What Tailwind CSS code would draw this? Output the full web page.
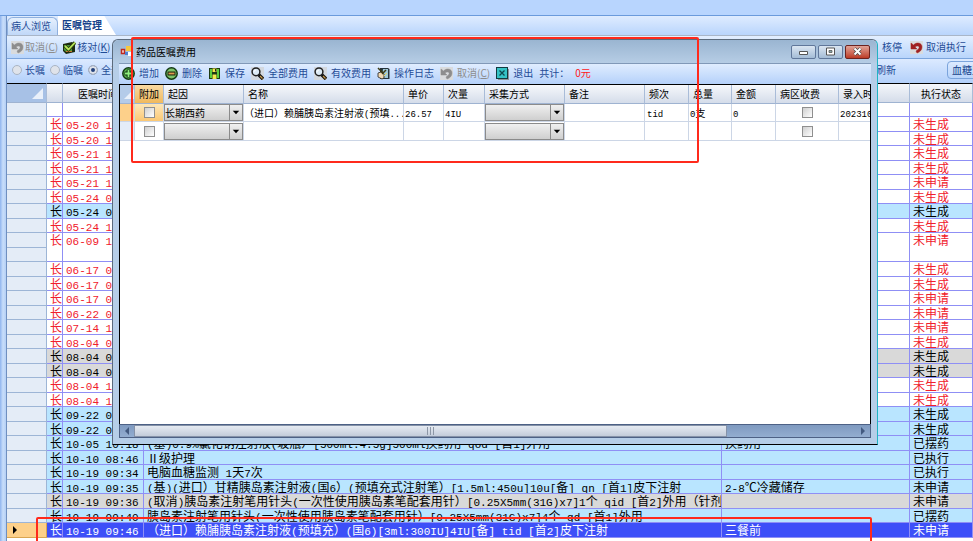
<!DOCTYPE html>
<html lang="zh-CN">
<head>
    <meta charset="UTF-8">
    <meta name="viewport" content="width=device-width, initial-scale=1.0">
    <title>医嘱管理</title>
    <script src="https://cdn.jsdelivr.net/npm/@tailwindcss/browser@4"></script>
</head>
<body class="relative h-screen overflow-hidden bg-white font-['Noto_Sans_CJK_SC',sans-serif] text-[10px] leading-[14px] text-[#1f4b96]">
    <!-- Icons -->
    <svg class="hidden">
        <symbol id="i-undo" viewBox="0 0 13 13"><path d="M0 0h13v13H0z" fill="#d9dbdd"/><path d="M1 2v6h6L5 6c2-2 5-1 4 1-.3 1-1.500 2-3 3l1 2c3-1 5-3 5-6 0-4-5-5.500-8.500-2z" fill="currentColor" stroke="currentColor" stroke-width=".5"/></symbol>
        <symbol id="i-check" viewBox="0 0 13 13"><path d="M0 3l9-2 3 2v8l-9 2-3-3z" fill="#1c2a10"/><path d="M1 4h8v7H3L1 9z" fill="#4b9a3a"/><path d="M3 10h6v1H3z" fill="#c8742e"/><path d="M2 5l3.500 3.500L12 1.500" fill="none" stroke="#2b3a10" stroke-width="3.400"/><path d="M2 5l3.500 3.500L12 1.500" fill="none" stroke="#b9ea5a" stroke-width="1.800"/></symbol>
        <symbol id="i-add" viewBox="0 0 13 13"><circle cx="6.500" cy="6.500" r="5.700" fill="#5fbf52" stroke="#143a14" stroke-width="1.500"/><path d="M6.500 2.500v8M2.500 6.500h8" stroke="#0f2d0f" stroke-width="3.800"/><path d="M6.500 3v7M3 6.500h7" stroke="#8ef07c" stroke-width="1.800"/></symbol>
        <symbol id="i-del" viewBox="0 0 13 13"><circle cx="6.500" cy="6.500" r="5.700" fill="#7cc46a" stroke="#143a14" stroke-width="1.500"/><path d="M2.500 4.500h8v4h-8z" fill="#1e2a12"/><path d="M3.500 6.500h6" stroke="#e09a50" stroke-width="1.800"/></symbol>
        <symbol id="i-save" viewBox="0 0 13 13"><path d="M1 1h11v11H1z" fill="#1d3b14"/><path d="M2 2h2v9H2zM9 2h2v9H9z" fill="#5ccf3c"/><path d="M4.500 1.500h4V5h-4zM4.500 7.500h4V12h-4z" fill="#f4e94c"/><path d="M7 2h1v2.500H7z" fill="#222"/></symbol>
        <symbol id="i-find" viewBox="0 0 13 13"><path d="M0 0h13v13H0z" fill="#d3d8de"/><path d="M7.500 7.500l4.500 4.500" stroke="#111" stroke-width="3.400"/><path d="M9 9l2.500 2.500" stroke="#c99b4a" stroke-width="1.200"/><circle cx="5" cy="4.800" r="3.900" fill="#dceaf5" stroke="#222" stroke-width="1.500"/><path d="M3 5a2 2 0 0 1 2-2" stroke="#fff" fill="none"/></symbol>
        <symbol id="i-log" viewBox="0 0 13 13"><path d="M3 1h8l1.500 1v10H3z" fill="#26343c"/><path d="M6 2h5v9H5z" fill="#9fc7d8"/><path d="M1 6l3-1 3 2v4l-2 1-4-2z" fill="#f1d9b4" stroke="#222" stroke-width=".8"/><path d="M1 1l5 5M9 3l-4 4" stroke="#3c3a14" stroke-width="1.500"/><path d="M7 9l3-3" stroke="#e8dd62"/></symbol>
        <symbol id="i-exit" viewBox="0 0 13 13"><path d="M2 2h11v11H2z" fill="#8f9296"/><path d="M0 0h12v12H0z" fill="#123a40"/><path d="M1 1h10v10H1z" fill="#35c3c6"/><path d="M3.500 3.500l5 5M8.500 3.500l-5 5" stroke="#0c4a50" stroke-width="1.300"/></symbol>
        <symbol id="i-form" viewBox="0 0 13 13"><path d="M1.500 4.500h3v4h-3z" fill="#fbe3df" stroke="#c0281e" stroke-width="1.500"/><path d="M6 1h6v5H6z" fill="#f6c73f"/><path d="M5 7h3v3H5z" fill="#4e7fd6"/><path d="M8 7h4v4H8z" fill="#fff"/></symbol>
    </svg>

    <div class="flex h-full flex-col">
        <div class="h-[16px] shrink-0 border-b border-[#6b9bdc] bg-[#b8d5fe]"></div>
        <div class="flex min-h-0 flex-1">
            <div class="w-[7px] shrink-0 border-r border-[#6f8fc0] bg-linear-to-r from-[#8fb4ee] via-[#c9defa] to-[#b4cff5]"></div>
            <div class="flex min-w-0 flex-1 flex-col">
                <!-- Tabs -->
                <nav class="flex h-[20px] shrink-0 items-end border-b border-[#a9b6c8] bg-linear-to-b from-[#dfecff] to-[#b9d5fc]">
                    <a href="#" class="h-[18px] w-[51px] rounded-t-md border border-b-0 border-[#8fb0de] bg-linear-to-b from-[#e6f0fd] to-[#c0d8f8] pl-[3px] leading-[15px]">病人浏览</a>
                    <a href="#" class="h-[19px] w-[58px] bg-white pl-[4px] font-bold text-[#15428b] leading-[17px] [clip-path:polygon(0_0,80%_0,100%_100%,0_100%)]">医嘱管理</a>
                </nav>

                <!-- Toolbars -->
                <div class="flex h-[23px] shrink-0 items-center border-b border-[#7ba4dc] bg-linear-to-b from-[#e3efff] to-[#b9d5fb]">
                    <div class="flex w-[857px] shrink-0 items-center gap-[5px] pl-[4px]">
                        <button class="flex items-center gap-[1px] text-[#8d8d8d]"><svg class="size-[13px]"><use href="#i-undo"/></svg><span>取消(<u>C</u>)</span></button>
                        <button class="flex items-center gap-[1px]"><svg class="size-[13px]"><use href="#i-check"/></svg><span>核对(<u>K</u>)</span></button>
                    </div>
                    <button class="flex items-center gap-[5px]"><svg class="size-[13px]"><use href="#i-check"/></svg>核停</button>
                    <button class="ml-[8px] flex items-center gap-[3px]"><svg class="size-[13px] text-[#a02020]"><use href="#i-undo"/></svg>取消执行</button>
                </div>
                <div class="flex h-[24px] shrink-0 items-center bg-linear-to-b from-[#dceaff] to-[#b3d0fa] pb-[3px]">
                    <div class="flex w-[869px] shrink-0 items-center gap-[5px] pl-[5px]">
                        <label class="flex items-center gap-[3px]"><input type="radio" name="kind" class="size-[10px] appearance-none rounded-full border border-[#a9b4c4] bg-[#dfe3ea]">长嘱</label>
                        <label class="flex items-center gap-[3px]"><input type="radio" name="kind" class="size-[10px] appearance-none rounded-full border border-[#a9b4c4] bg-[#dfe3ea]">临嘱</label>
                        <label class="flex items-center gap-[3px]"><input type="radio" name="kind" checked class="size-[10px] appearance-none rounded-full border border-[#a9b4c4] bg-[#24427c] shadow-[inset_0_0_0_2px_#dfe3ea]">全部</label>
                    </div>
                    <button class="shrink-0">刷新</button>
                    <button class="ml-auto h-[18px] w-[50px] shrink-0 -mr-[24px] rounded-sm border border-[#7ba4dc] bg-linear-to-b from-[#dceaff] to-[#b9d5fb] text-[#15428b] whitespace-nowrap">血糖监测</button>
                </div>

                <!-- Orders -->
                <table class="w-full table-fixed border-separate border-spacing-0 text-[12px] leading-[13px]">
                    <colgroup>
                        <col class="w-[40px]"><col class="w-[16px]"><col class="w-[81px]"><col class="w-[578px]"><col class="w-[188px]"><col>
                    </colgroup>
                    <thead class="text-[10px] text-black">
                        <tr class="h-[20px] bg-linear-to-b from-[#f6f8fb] to-[#d3dbe9] *:border-t *:border-r *:border-b *:border-t-black *:border-r-[#a9bcd8] *:border-b-[#9fb3d1] *:p-0 *:font-normal">
                            <th class="bg-[#a7c1e6]"><svg class="ml-auto mr-[3px] size-[11px]" viewBox="0 0 11 11"><path d="M11 0v11H0z" fill="#e9f0fa"/></svg></th>
                            <th></th>
                            <th><span class="mr-[10px]">医嘱时间</span></th>
                            <th></th>
                            <th></th>
                            <th>执行状态</th>
                        </tr>
                    </thead>
                    <tbody id="orders"></tbody>
                </table>
            </div>
        </div>
    </div>

    <!-- Fee dialog -->
    <section class="absolute top-[39px] left-[112px] flex h-[406px] w-[766px] flex-col rounded-t-md border border-[#5c6b7c] border-r-[#22b4c4] border-b-black bg-[#b6cee8] px-[6px] pb-[6px]">
        <header class="-mx-[6px] flex h-[23px] shrink-0 items-center rounded-t-md bg-linear-to-b from-[#9ab5d1] to-[#b6cde5] px-[7px] text-black">
            <svg class="mr-[3px] size-[13px]"><use href="#i-form"/></svg>
            <h1>药品医嘱费用</h1>
            <div class="ml-auto flex gap-[2px]">
                <button aria-label="最小化" class="flex h-[14px] w-[25px] items-center justify-center rounded-[2px] border border-[#60779a] bg-linear-to-b from-[#dbe6f2] to-[#a4bcd6]"><svg class="size-[9px]" viewBox="0 0 9 9"><path d="M.5 4.500h8v3h-8z" fill="#fff" stroke="#555"/></svg></button>
                <button aria-label="最大化" class="flex h-[14px] w-[25px] items-center justify-center rounded-[2px] border border-[#60779a] bg-linear-to-b from-[#dbe6f2] to-[#a4bcd6]"><svg class="size-[9px]" viewBox="0 0 9 9"><path d="M.5 1h8v7h-8z" fill="#fff" stroke="#555"/><path d="M3 3.500h3v2H3z" fill="#8aa" stroke="#555" stroke-width=".8"/></svg></button>
                <button aria-label="关闭" class="flex h-[14px] w-[25px] items-center justify-center rounded-[2px] border border-[#6b2320] bg-linear-to-b from-[#e0a297] to-[#bb3a26]"><svg class="size-[9px]" viewBox="0 0 9 9"><path d="M1.500 1.500l6 6M7.500 1.500l-6 6" stroke="#444" stroke-width="3.200"/><path d="M1.500 1.500l6 6M7.500 1.500l-6 6" stroke="#fff" stroke-width="2"/></svg></button>
            </div>
        </header>
        <div class="flex h-[21px] shrink-0 items-center gap-[6px] border-t border-[#8199b8] bg-linear-to-b from-[#e0edff] to-[#b5d1fa] pb-[2px] pl-[3px]">
            <button class="flex items-center gap-[4px]"><svg class="size-[13px]"><use href="#i-add"/></svg>增加</button>
            <button class="flex items-center gap-[4px]"><svg class="size-[13px]"><use href="#i-del"/></svg>删除</button>
            <button class="flex items-center gap-[4px]"><svg class="size-[13px]"><use href="#i-save"/></svg>保存</button>
            <button class="flex items-center gap-[4px]"><svg class="size-[13px]"><use href="#i-find"/></svg>全部费用</button>
            <button class="flex items-center gap-[4px]"><svg class="size-[13px]"><use href="#i-find"/></svg>有效费用</button>
            <button class="flex items-center gap-[4px]"><svg class="size-[13px]"><use href="#i-log"/></svg>操作日志</button>
            <button class="flex items-center gap-[4px] text-[#8d8d8d]"><svg class="size-[13px]"><use href="#i-undo"/></svg><span>取消(<u>C</u>)</span></button>
            <button class="flex items-center gap-[4px]"><svg class="size-[13px]"><use href="#i-exit"/></svg>退出</button>
            <span>共计：</span>
            <span class="text-[#ff1a1a]">0元</span>
        </div>
        <div class="min-h-0 flex-1 overflow-hidden border-x border-t border-black bg-white text-black">
            <table class="w-[780px] table-fixed border-separate border-spacing-0">
                <colgroup>
                    <col class="w-[15px]"><col class="w-[29px]"><col class="w-[80px]"><col class="w-[160px]"><col class="w-[40px]"><col class="w-[41px]"><col class="w-[80px]"><col class="w-[80px]"><col class="w-[44px]"><col class="w-[43px]"><col class="w-[44px]"><col class="w-[63px]"><col>
                </colgroup>
                <thead>
                    <tr class="h-[19px] bg-linear-to-b from-[#f6f8fb] to-[#d3dbe9] text-left *:border-r *:border-b *:border-r-[#a9bcd8] *:border-b-[#9fb3d1] *:p-0 *:pl-[4px] *:font-normal">
                        <th class="bg-[#b4cbe9]"><svg class="size-[10px]" viewBox="0 0 11 11"><path d="M11 0v11H0z" fill="#e9f0fa"/></svg></th>
                        <th class="bg-linear-to-b from-[#f8d9a2] to-[#f0b95c]">附加</th>
                        <th>起因</th><th>名称</th><th>单价</th><th>次量</th><th>采集方式</th><th>备注</th><th>频次</th><th>总量</th><th>金额</th><th>病区收费</th><th class="whitespace-nowrap">录入时间</th>
                    </tr>
                </thead>
                <tbody id="fees"></tbody>
            </table>
        </div>
        <div class="flex h-[14px] shrink-0 items-center justify-between border border-[#4d6185] bg-linear-to-b from-[#7f9ac0] to-[#93add0]">
            <svg class="w-[14px] shrink-0" viewBox="0 0 14 12"><path d="M9 2v8L5 6z" fill="#435a80"/></svg>
            <div class="flex h-full w-[593px] items-center justify-center border border-[#8592a8] bg-linear-to-b from-[#e6ebf2] to-[#c3ccda]">
                <svg class="h-[8px] w-[7px]" viewBox="0 0 7 8"><path d="M.5 0v8M3.500 0v8M6.500 0v8" stroke="#8d97a6"/></svg>
            </div>
            <svg class="ml-auto w-[14px] shrink-0" viewBox="0 0 14 12"><path d="M5 2v8l4-4z" fill="#435a80"/></svg>
        </div>
    </section>

    <!-- Highlight boxes -->
    <div class="pointer-events-none absolute top-[37px] left-[131px] h-[126px] w-[568px] rounded-xs border-2 border-[#ff2a1c]"></div>
    <div class="pointer-events-none absolute top-[517px] left-[36px] h-[40px] w-[836px] rounded-xs border-2 border-[#ff2a1c]"></div>

    <script>
        // kind, time, order, remark, status
        const orders = [
            ['red', '05-20 10:12', '', '', '未生成'],
            ['red', '05-20 10:12', '', '', '未生成'],
            ['red', '05-21 10:05', '', '', '未生成'],
            ['red', '05-21 10:05', '', '', '未生成'],
            ['red', '05-21 10:06', '', '', '未申请'],
            ['red', '05-24 08:30', '', '', '未生成'],
            ['blue', '05-24 08:31', '', '', '未生成'],
            ['red', '05-24 10:20', '', '', '未生成'],
            ['tall', '06-09 10:11', '', '', '未申请'],
            ['red', '06-17 09:02', '', '', '未生成'],
            ['red', '06-17 09:02', '', '', '未生成'],
            ['red', '06-17 09:03', '', '', '未申请'],
            ['red', '06-22 08:47', '', '', '未申请'],
            ['red', '07-14 10:15', '', '', '未申请'],
            ['red', '08-04 09:21', '', '', '未生成'],
            ['gray', '08-04 09:21', '', '', '未生成'],
            ['gray', '08-04 09:22', '', '', '未生成'],
            ['red', '08-04 10:01', '', '', '未生成'],
            ['red', '08-04 10:01', '', '', '未生成'],
            ['blue', '09-22 09:40', '', '', '未生成'],
            ['blue', '09-22 09:40', '', '', '未生成'],
            ['blue', '10-05 10:18', '(基)0.9%氯化钠注射液(玻瓶）[500ml:4.5g]500ml换药用 qod [首1]外用', '换药用', '已摆药'],
            ['blue', '10-10 08:46', 'Ⅱ级护理', '', '已执行'],
            ['blue', '10-19 09:34', '电脑血糖监测 1天7次', '', '已执行'],
            ['blue', '10-19 09:35', '(基)(进口）甘精胰岛素注射液(国6）(预填充式注射笔）[1.5ml:450u]10u[备] qn [首1]皮下注射', '2-8℃冷藏储存', '未申请'],
            ['gray', '10-19 09:36', '(取消)胰岛素注射笔用针头(一次性使用胰岛素笔配套用针）[0.25X5mm(31G)x7]1个 qid [首2]外用（针剂', '', '未申请'],
            ['blue', '10-19 09:40', '胰岛素注射笔用针头(一次性使用胰岛素笔配套用针）[0.25X5mm(31G)x7]4个 qd [首1]外用', '', '已摆药'],
            ['current', '10-19 09:46', '（进口）赖脯胰岛素注射液(预填充）(国6)[3ml:300IU]4IU[备] tid [首2]皮下注射', '三餐前', '未申请'],
        ];
        const kinds = {
            red: 'bg-white text-[#f0202c]',
            tall: 'bg-white text-[#f0202c]',
            blue: 'bg-[#b9e5ff] text-black',
            gray: 'bg-[#d9d9d9] text-black',
            current: 'bg-[#3d4ff8] text-white',
        };
        const latin = (s) => s.replace(/[\x20-\x7e]+/g, (m) => `<span class="font-['Liberation_Mono',monospace] text-[11px] leading-[1px]">${m}</span>`);
        const row = 'odd:h-[14px] even:h-[15px]';
        const cell = 'overflow-hidden whitespace-pre border-r border-b border-[#8f8ff5] p-0 pl-[3px]';
        const head = (kind) => kind === 'current'
            ? '<td class="border-r border-b border-[#d9a552] bg-[#fdd08a] p-0"><svg class="ml-[5px] h-[8px] w-[6px]" viewBox="0 0 6 8"><path d="M1 0v8l4-4z" fill="#000"/></svg></td>'
            : '<td class="border-r border-b border-[#9db5d6] bg-[#e4ecf7] p-0"></td>';

        let html = `<tr class="${row}">${head('')}` + `<td class="${cell}"></td>`.repeat(5) + '</tr>';
        for (const [kind, time, order, remark, status] of orders) {
            const span = kind === 'tall' ? ' rowspan="2"' : '';
            html += `<tr class="${row}">${head(kind)}` + ['长', time, order, remark, status]
                .map((t) => `<td${span} class="${cell} ${kinds[kind]} align-top">${latin(t)}</td>`).join('') + '</tr>';
            if (kind === 'tall') html += `<tr class="${row}">${head('')}</tr>`;
        }
        document.getElementById('orders').innerHTML = html;

        const fees = [
            ['长期西药', '（进口）赖脯胰岛素注射液(预填...', '26.57', '4IU', '', '', 'tid', '0支', '0', '20231019'],
            ['', '', '', '', '', '', '', '', '', ''],
        ];
        const small = (s) => s.replace(/[\x20-\x7e]+/g, (m) => `<span class="font-['Liberation_Mono',monospace] text-[9px] leading-[1px]">${m}</span>`);
        const select = (v, label) => `<div class="relative h-[17px]"><select aria-label="${label}" class="block h-full w-full appearance-none border border-[#8b8b8b] bg-linear-to-b from-[#f0f0f0] to-[#cfcfcf]"><option>${v}</option></select><svg class="pointer-events-none absolute top-[1px] right-[1px] h-[15px] w-[13px] border-l border-[#8b8b8b]" viewBox="0 0 13 16"><path d="M3 6h7l-3.500 4z" fill="#000"/></svg></div>`;
        const box = (label) => `<input type="checkbox" aria-label="${label}" class="mx-auto block size-[11px] appearance-none border border-[#8f8f8f] bg-linear-to-br from-[#d0d0d0] to-white">`;
        const fcell = 'overflow-hidden whitespace-nowrap border-r border-b border-[#ccd6e6] p-0';
        document.getElementById('fees').innerHTML = fees.map(([cause, name, price, dose, way, note, freq, total, sum, date], i) => `<tr class="odd:h-[18px] even:h-[19px]">
            <td class="${fcell} ${i ? 'bg-[#e4ecf7]' : 'bg-[#fdd08a]'}"></td>
            <td class="${fcell} ${i ? 'bg-white' : 'bg-linear-to-b from-[#fde7b8] to-[#fbc873]'}">${box('附加')}</td>
            <td class="${fcell}">${select(cause, '起因')}</td>
            <td class="${fcell}">${small(name)}</td>
            <td class="${fcell} pl-[1px]">${small(price)}</td>
            <td class="${fcell} pl-[1px]">${small(dose)}</td>
            <td class="${fcell}">${select(way, '采集方式')}</td>
            <td class="${fcell}">${note}</td>
            <td class="${fcell} pl-[2px]">${small(freq)}</td>
            <td class="${fcell} pl-[1px]">${small(total)}</td>
            <td class="${fcell} pl-[1px]">${small(sum)}</td>
            <td class="${fcell}">${box('病区收费')}</td>
            <td class="${fcell} pl-[1px]">${small(date)}</td>
        </tr>`).join('');
    </script>
</body>
</html>
